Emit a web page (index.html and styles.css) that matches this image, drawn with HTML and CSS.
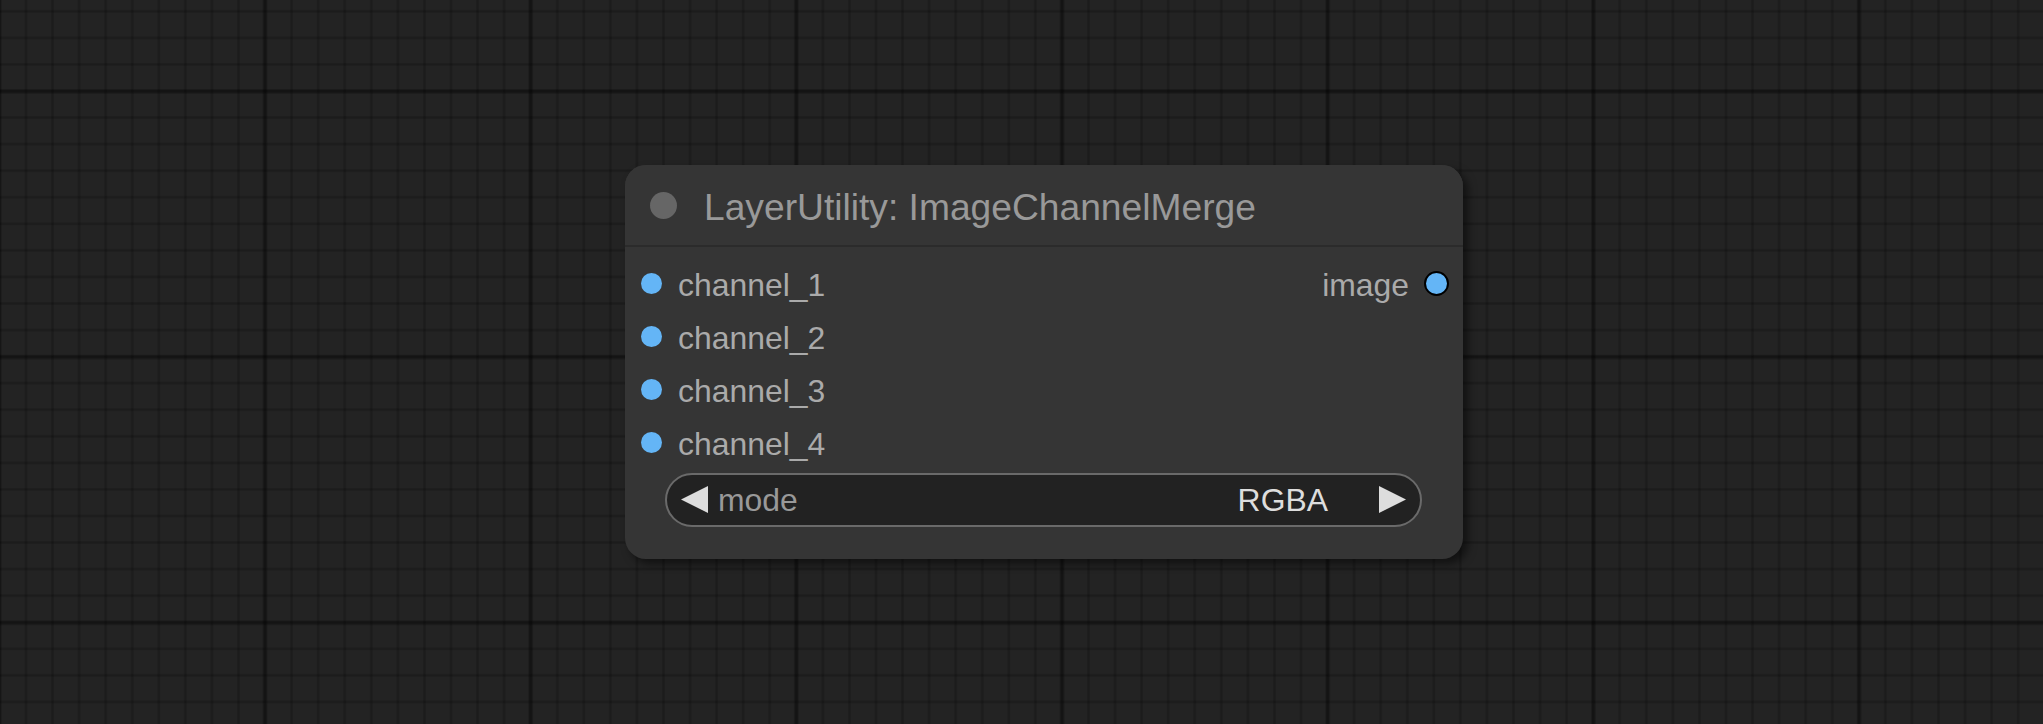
FILE: index.html
```html
<!DOCTYPE html>
<html>
<head>
<meta charset="utf-8">
<title>LayerUtility: ImageChannelMerge</title>
<link rel="stylesheet" href="styles.css">
</head>
<body>
<div class="canvas">
  <div class="node">
    <div class="node-title">
      <span class="title-dot"></span>
      <span class="title-text">LayerUtility: ImageChannelMerge</span>
    </div>
    <div class="node-body">
      <div class="slots">
        <div class="inputs">
          <div class="slot"><span class="dot in"></span><span class="label">channel_1</span></div>
          <div class="slot"><span class="dot in"></span><span class="label">channel_2</span></div>
          <div class="slot"><span class="dot in"></span><span class="label">channel_3</span></div>
          <div class="slot"><span class="dot in"></span><span class="label">channel_4</span></div>
        </div>
        <div class="outputs">
          <div class="slot out-slot"><span class="label">image</span><span class="dot out"></span></div>
        </div>
      </div>
      <div class="widget">
        <svg class="arrow" width="27" height="27" viewBox="0 0 10 10"><polygon points="10,0 0,5 10,10" fill="#dddddd"/></svg>
        <span class="w-name">mode</span>
        <span class="w-value">RGBA</span>
        <svg class="arrow" width="27" height="27" viewBox="0 0 10 10"><polygon points="0,0 10,5 0,10" fill="#dddddd"/></svg>
      </div>
    </div>
  </div>
</div>
</body>
</html>
```
FILE: styles.css
```css
html, body {
  margin: 0;
  padding: 0;
  background: #222222;
}

.canvas {
  position: relative;
  width: 2043px;
  height: 724px;
  overflow: hidden;
  background-color: #232323;
  background-image:
    linear-gradient(to right, rgba(0,0,0,0.12) 0, rgba(0,0,0,0.3) 1.5px, rgba(0,0,0,0.3) 3.5px, rgba(0,0,0,0.12) 5px, transparent 5px),
    linear-gradient(to bottom, rgba(0,0,0,0.12) 0, rgba(0,0,0,0.3) 1.5px, rgba(0,0,0,0.3) 3.5px, rgba(0,0,0,0.12) 5px, transparent 5px),
    linear-gradient(to right, rgba(0,0,0,0.08) 0, rgba(0,0,0,0.2) 1px, rgba(0,0,0,0.2) 2px, rgba(0,0,0,0.08) 3px, transparent 3px),
    linear-gradient(to bottom, rgba(0,0,0,0.08) 0, rgba(0,0,0,0.2) 1px, rgba(0,0,0,0.2) 2px, rgba(0,0,0,0.08) 3px, transparent 3px);
  background-size:
    265.7px 265.7px,
    265.7px 265.7px,
    26.57px 26.57px,
    26.57px 26.57px;
  background-position:
    262.5px 0,
    0 89px,
    24.5px 0,
    0 9.8px;
  font-family: "Liberation Sans", Arial, sans-serif;
}

.node {
  position: absolute;
  left: 625px;
  top: 165px;
  width: 838px;
  background: #353535;
  border-radius: 21px;
  box-shadow: 5px 5px 8px rgba(0,0,0,0.5);
  padding-bottom: 32px;
}

.node-title {
  height: 80px;
  display: flex;
  align-items: center;
  padding-left: 25px;
  background: #353535;
  border-radius: 21px 21px 0 0;
  border-bottom: 2px solid #2b2b2b;
}

.title-dot {
  width: 27px;
  height: 27px;
  border-radius: 50%;
  background: #666666;
  flex: none;
}

.title-text {
  margin-left: 27px;
  margin-top: 3px;
  font-size: 37.2px;
  line-height: 42px;
  color: #999999;
  white-space: nowrap;
}

.node-body {
  padding-top: 10px;
}

.slots {
  display: flex;
  justify-content: space-between;
}

.inputs, .outputs {
  display: flex;
  flex-direction: column;
}

.slot {
  height: 53.14px;
  display: flex;
  align-items: center;
}

.label {
  font-size: 31.9px;
  line-height: 36px;
  color: #aaaaaa;
  margin-top: 2px;
  white-space: nowrap;
}

.dot {
  flex: none;
  border-radius: 50%;
  background: #64b5f6;
}

.dot.in {
  width: 21px;
  height: 21px;
  margin-left: 16px;
  margin-right: 16px;
}

.dot.out {
  width: 21px;
  height: 21px;
  border: 2px solid #000000;
  margin-left: 15px;
  margin-right: 14px;
}

.widget {
  margin: 3px 0 0 40px;
  width: 757px;
  height: 54px;
  box-sizing: border-box;
  border: 2px solid #6a6a6a;
  border-radius: 27px;
  background: #222222;
  display: flex;
  align-items: center;
  padding: 0 14px;
}

.arrow {
  flex: none;
  display: block;
}

.w-name {
  margin-left: 10px;
  font-size: 31.9px;
  line-height: 36px;
  color: #999999;
  flex: 1;
}

.w-value {
  font-size: 31.9px;
  line-height: 36px;
  color: #dddddd;
  margin-right: 51px;
}
```
